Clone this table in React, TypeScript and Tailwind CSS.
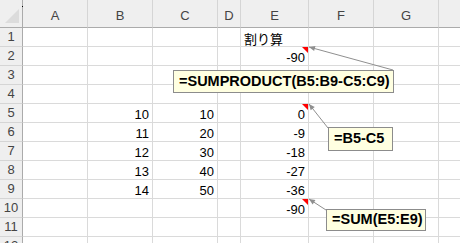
import React from "react";

const cols = ["A", "B", "C", "D", "E", "F", "G", "H"];
const colWidths = ["w-[65px]", "w-[65px]", "w-[65px]", "w-[23px]", "w-[68px]", "w-[65px]", "w-[65px]", "w-[65px]"];

type Cell = { text: string; align?: "left" | "right"; note?: boolean };
const data: Record<number, Record<string, Cell>> = {
  1: { E: { text: "割り算", align: "left" } },
  2: { E: { text: "-90", note: true } },
  5: { B: { text: "10" }, C: { text: "10" }, E: { text: "0", note: true } },
  6: { B: { text: "11" }, C: { text: "20" }, E: { text: "-9" } },
  7: { B: { text: "12" }, C: { text: "30" }, E: { text: "-18" } },
  8: { B: { text: "13" }, C: { text: "40" }, E: { text: "-27" } },
  9: { B: { text: "14" }, C: { text: "50" }, E: { text: "-36" } },
  10: { E: { text: "-90", note: true } },
};

const rows = Array.from({ length: 12 }, (_, i) => i + 1);

function arrowHead(tx: number, ty: number, fx: number, fy: number) {
  const dx = fx - tx;
  const dy = fy - ty;
  const len = Math.hypot(dx, dy);
  const ux = dx / len;
  const uy = dy / len;
  const bx = tx + ux * 6;
  const by = ty + uy * 6;
  const px = -uy * 2.6;
  const py = ux * 2.6;
  return `${tx},${ty} ${bx + px},${by + py} ${bx - px},${by - py}`;
}

const arrows = [
  { tx: 309, ty: 47, fx: 393, fy: 70 },
  { tx: 309, ty: 104, fx: 328, fy: 128 },
  { tx: 309, ty: 199, fx: 326, fy: 210 },
];

const Comment = ({ text, className }: { text: string; className: string }) => (
  <div
    className={`absolute flex items-center bg-[#ffffe1] border border-[#8c8c8c] pl-[5px] text-[14.5px] font-bold text-black whitespace-nowrap ${className}`}
    style={{ fontFamily: '"Liberation Sans", Arial, sans-serif' }}
  >
    {text}
  </div>
);

export default function App() {
  return (
    <div
      className="relative w-[460px] h-[243px] overflow-hidden bg-white"
      style={{ fontFamily: '"Liberation Sans", "Noto Sans CJK JP", sans-serif' }}
    >
      {/* column headers */}
      <div className="flex h-[28px]">
        <div className="relative w-[23px] shrink-0 bg-[#efefef] border-r border-b border-[#ababab]">
          <svg className="absolute left-0 top-0" width="22" height="27">
            <polygon points="19,9 19,23 5,23" fill="#dcdcdc" />
          </svg>
          <span className="absolute left-[22px] top-[6px] w-[1px] h-[1px] bg-black" />
        </div>
        {cols.map((c, i) => (
          <div
            key={c}
            className={`${colWidths[i]} shrink-0 flex items-end justify-center pb-[5px] bg-[#efefef] border-r border-r-[#d5d5d5] border-b border-b-[#ababab] text-[13px] leading-[13px] text-[#444]`}
          >
            {/* H sits past the window edge, its label is not visible */}
            {c === "H" ? null : c}
          </div>
        ))}
      </div>

      {rows.map((r) => (
        <div key={r} className="flex h-[19px]">
          <div className="w-[23px] shrink-0 flex items-end justify-center pb-[3px] bg-[#efefef] border-r border-r-[#ababab] border-b border-b-[#d5d5d5] text-[13px] leading-[13px] text-[#444]">
            {r}
          </div>
          {cols.map((c, i) => {
            const cell = data[r]?.[c];
            return (
              <div
                key={c}
                className={`${colWidths[i]} shrink-0 relative flex items-end pb-[1px] border-r border-b border-[#dadada] text-[13px] leading-[13px] text-black ${
                  cell?.align === "left" ? "justify-start pl-[3px]" : "justify-end pr-[3px]"
                }`}
              >
                {cell && (
                  <span
                    style={
                      cell.align === "left"
                        ? { fontFamily: '"Noto Sans CJK JP", sans-serif' }
                        : undefined
                    }
                  >
                    {cell.text}
                  </span>
                )}
                {cell?.note && (
                  <svg className="absolute right-0 top-0" width="6" height="6">
                    <polygon points="0,0 6,0 6,6" fill="#ff0000" />
                  </svg>
                )}
              </div>
            );
          })}
        </div>
      ))}

      <svg className="absolute inset-0 pointer-events-none" width="460" height="243">
        {arrows.map((a, i) => (
          <g key={i}>
            <line x1={a.fx} y1={a.fy} x2={a.tx} y2={a.ty} stroke="#8f8f8f" strokeWidth="1" />
            <polygon points={arrowHead(a.tx, a.ty, a.fx, a.fy)} fill="#8f8f8f" />
          </g>
        ))}
      </svg>

      <Comment text="=SUMPRODUCT(B5:B9-C5:C9)" className="left-[173px] top-[70px] w-[221px] h-[23px]" />
      <Comment text="=B5-C5" className="left-[328px] top-[127px] w-[65px] h-[24px]" />
      <Comment text="=SUM(E5:E9)" className="left-[326px] top-[209px] w-[100px] h-[22px]" />
    </div>
  );
}
